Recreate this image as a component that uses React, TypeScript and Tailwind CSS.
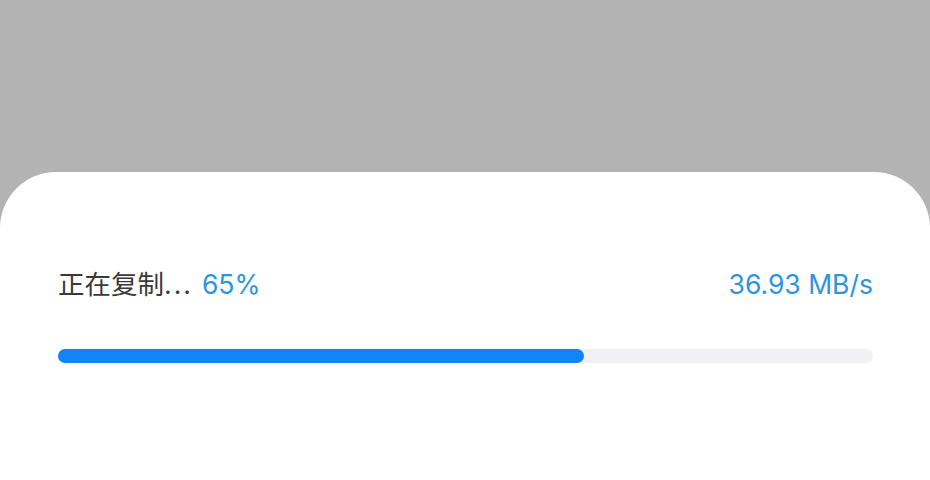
export default function App() {
  return (
    <div className="flex h-[480px] w-[930px] flex-col overflow-hidden bg-[#b3b3b3]">
      <div className="h-[172px] shrink-0" />
      <div className="flex-1 rounded-t-[56px] bg-white pl-[58px] pr-[57px]">
        <div className="mt-[96px] flex h-[32px] items-center justify-between text-[26.5px] leading-[32px] [font-family:Inter,'Noto_Sans_CJK_SC',sans-serif]">
          <p className="text-[#3a3a3a]">
            正在复制<span className="tracking-[2px]">...</span>
            <span className="ml-[9px] text-[#2d94e2]">65%</span>
          </p>
          <p className="text-[#2d94e2]">36.93 MB/s</p>
        </div>
        <div className="mt-[49px] h-[14px] w-full rounded-full bg-[#f0f0f5]">
          <div className="h-full w-[64.5%] rounded-full bg-[#1384f6]" />
        </div>
      </div>
    </div>
  )
}
